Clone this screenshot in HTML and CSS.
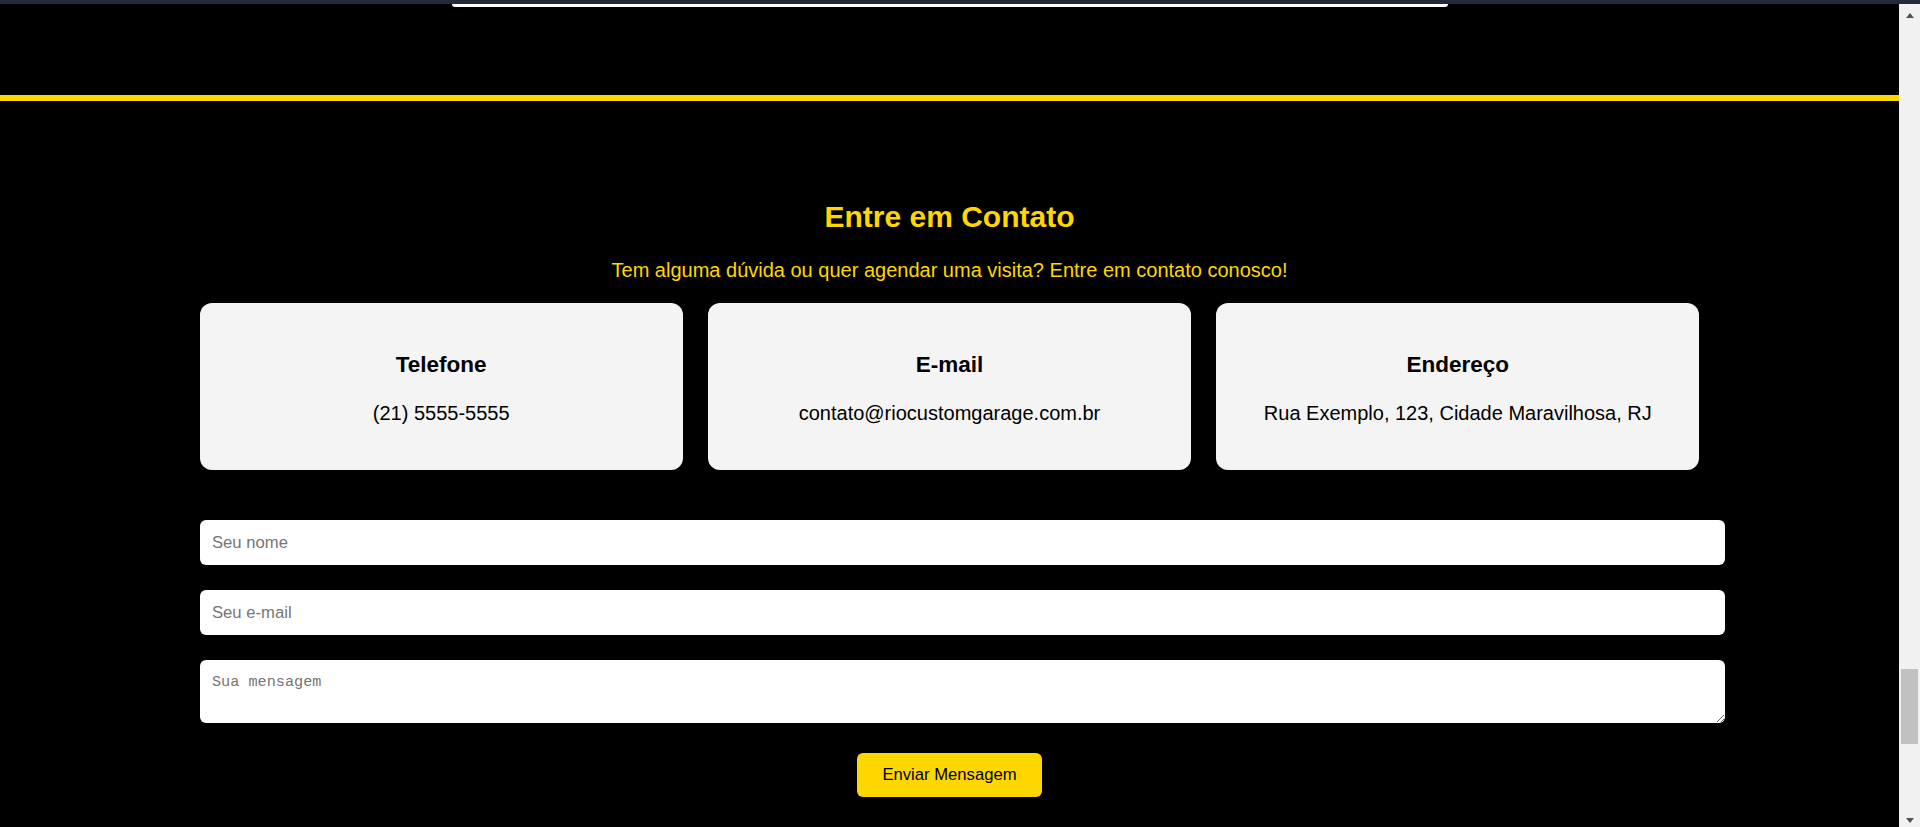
FILE: index.html
```html
<!DOCTYPE html>
<html lang="pt-BR">
<head>
<meta charset="utf-8">
<title>Contato - Rio Custom Garage</title>
<link rel="stylesheet" href="styles.css">
</head>
<body>
<div class="frame">
  <div class="topbar"></div>
  <div class="viewport">
    <div class="page">
      <div class="prev-block"></div>
      <div class="divider"></div>
      <section class="contact">
        <div class="container">
          <h2 class="contact-title">Entre em Contato</h2>
          <p class="contact-sub">Tem alguma dúvida ou quer agendar uma visita? Entre em contato conosco!</p>
          <div class="cards">
            <div class="card">
              <h3 class="card-title">Telefone</h3>
              <p class="card-text">(21) 5555-5555</p>
            </div>
            <div class="card">
              <h3 class="card-title">E-mail</h3>
              <p class="card-text">contato@riocustomgarage.com.br</p>
            </div>
            <div class="card">
              <h3 class="card-title">Endereço</h3>
              <p class="card-text">Rua Exemplo, 123, Cidade Maravilhosa, RJ</p>
            </div>
          </div>
          <form class="form">
            <input class="field" type="text" placeholder="Seu nome">
            <input class="field" type="email" placeholder="Seu e-mail">
            <textarea class="field area" placeholder="Sua mensagem"></textarea>
            <div class="actions">
              <button class="send" type="button">Enviar Mensagem</button>
            </div>
          </form>
        </div>
      </section>
    </div>
    <div class="sb">
      <div class="sb-btn sb-up"><span class="tri-up"></span></div>
      <div class="sb-track"><div class="sb-thumb"></div></div>
      <div class="sb-btn sb-down"><span class="tri-down"></span></div>
    </div>
  </div>
</div>
</body>
</html>
```
FILE: styles.css
```css
html, body {
  margin: 0;
  padding: 0;
  height: 827px;
  overflow: hidden;
  background: #000;
  font-family: "Liberation Sans", Arial, sans-serif;
}

.frame {
  display: flex;
  flex-direction: column;
  height: 827px;
}

.topbar {
  height: 4px;
  background: #242a38;
  flex: none;
}

.viewport {
  flex: 1;
  display: flex;
  min-height: 0;
}

.page {
  flex: 1;
  min-width: 0;
  overflow: hidden;
  background: #000;
}

.prev-block {
  width: 996px;
  height: 3px;
  margin: 0 auto;
  background: #fff;
  border-radius: 0 0 10px 10px;
}

.divider {
  height: 6px;
  margin-top: 88px;
  background: #ffd700;
}

.contact {
  padding-top: 98px;
}

.container {
  width: 1500px;
  margin: 0 auto;
}

.contact-title {
  margin: 0;
  font-size: 30px;
  line-height: 35px;
  font-weight: bold;
  color: #ffd700;
  text-align: center;
}

.contact-sub {
  margin: 25px 0 0;
  font-size: 20px;
  line-height: 23px;
  color: #ffd700;
  text-align: center;
}

.cards {
  display: flex;
  gap: 25px;
  margin-top: 21px;
}

.card {
  flex: 1;
  background: #f4f4f4;
  border-radius: 12px;
  padding: 49px 25px 45px;
  text-align: center;
  color: #000;
}

.card-title {
  margin: 0 0 24px;
  font-size: 22.5px;
  line-height: 26px;
  font-weight: bold;
}

.card-text {
  margin: 0;
  font-size: 20px;
  line-height: 23px;
}

.form {
  margin-top: 50px;
  display: flex;
  flex-direction: column;
  gap: 25px;
}

.field {
  display: block;
  box-sizing: content-box;
  width: 100%;
  height: 45px;
  padding: 0 12.5px;
  border: none;
  border-radius: 6px;
  background: #fff;
  font-family: "Liberation Sans", Arial, sans-serif;
  font-size: 16.67px;
  color: #000;
  outline: none;
}

.field::placeholder {
  color: #757575;
}

.area {
  height: 38px;
  padding: 12.5px;
  font-family: "Liberation Mono", "DejaVu Sans Mono", monospace;
  font-size: 15.2px;
  line-height: 19px;
  resize: vertical;
}

.actions {
  margin-top: 5px;
  text-align: center;
}

.send {
  background: #ffd700;
  color: #000;
  border: none;
  border-radius: 6px;
  padding: 0 25px;
  height: 44px;
  font-family: "Liberation Sans", Arial, sans-serif;
  font-size: 16.67px;
  cursor: pointer;
}

/* fake browser scrollbar */
.sb {
  width: 21px;
  flex: none;
  display: flex;
  flex-direction: column;
  background: #f1f1f1;
}

.sb-btn {
  height: 21px;
  flex: none;
  display: flex;
  justify-content: center;
}

.sb-up {
  align-items: flex-start;
  padding-top: 9px;
  box-sizing: border-box;
}

.sb-down {
  align-items: flex-end;
  padding-bottom: 4px;
  box-sizing: border-box;
}

.tri-up {
  width: 0;
  height: 0;
  border-left: 4.5px solid transparent;
  border-right: 4.5px solid transparent;
  border-bottom: 5px solid #505050;
}

.tri-down {
  width: 0;
  height: 0;
  border-left: 4.5px solid transparent;
  border-right: 4.5px solid transparent;
  border-top: 5px solid #505050;
}

.sb-track {
  flex: 1;
}

.sb-thumb {
  width: 17px;
  height: 75px;
  margin: 644px 0 0 2px;
  background: #c1c1c1;
}
```
